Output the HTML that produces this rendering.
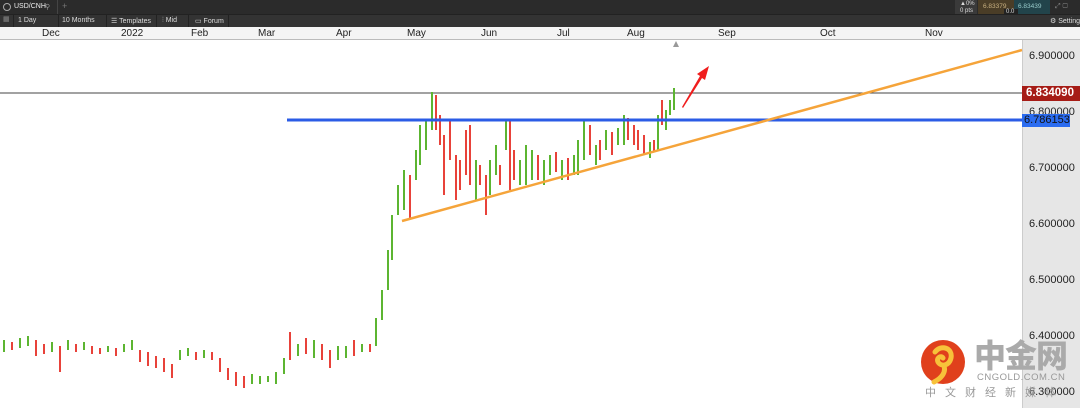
<!DOCTYPE html>
<html><head><meta charset="utf-8"><style>
*{margin:0;padding:0;box-sizing:border-box}
body{width:1080px;height:408px;overflow:hidden;background:#fff;font-family:"Liberation Sans",sans-serif;position:relative}
.bar1{position:absolute;left:0;top:0;width:1080px;height:14px;background:#2b2b2b}
.bar2{position:absolute;left:0;top:14px;width:1080px;height:13px;background:#333;border-top:1px solid #222}
.t{position:absolute;color:#ddd;font-size:7px;top:3px}
.seg{position:absolute;top:0;height:12px;border-right:1px solid #222}
.dax{position:absolute;left:0;top:27px;width:1080px;height:13px;background:#f4f4f4;border-bottom:1px solid #bbb}
.dax span{position:absolute;top:1px;font-size:10px;color:#222}
.pax{position:absolute;left:1022px;top:40px;width:58px;height:368px;background:#e6e6e6;border-left:1px solid #ccc}
.pl{position:absolute;left:1029px;font-size:11px;color:#222}
</style></head><body>
<div class="bar1">
 <div style="position:absolute;left:3px;top:3px;width:8px;height:8px;border:1px solid #aaa;border-radius:50%"></div>
 <span class="t" style="left:14px;color:#eee">USD/CNH</span>
 <span class="t" style="left:45px;color:#999">&#9906;</span>
 <div style="position:absolute;left:57px;top:0;width:1px;height:14px;background:#444"></div>
 <span class="t" style="left:62px;color:#777;font-size:9px;top:1px">+</span>
 <div style="position:absolute;left:955px;top:0;width:22px;height:14px;background:#3a3a3a"></div>
 <span class="t" style="left:960px;top:1px;font-size:6px">▲0%</span>
 <span class="t" style="left:960px;top:8px;font-size:6px">0 pts</span>
 <div style="position:absolute;left:978px;top:0;width:36px;height:14px;background:#4a3d27"></div>
 <span class="t" style="left:983px;font-size:6.5px;color:#c8b080">6.83379</span>
 <div style="position:absolute;left:1014px;top:0;width:36px;height:14px;background:#22444b"></div>
 <span class="t" style="left:1018px;font-size:6.5px;color:#9cc">6.83439</span>
 <div style="position:absolute;left:1004px;top:9px;width:14px;height:7px;background:#222"></div>
 <span class="t" style="left:1006px;top:9px;font-size:6px">0.0</span>
 <span class="t" style="left:1055px;color:#888">⤢ ▢</span>
</div>
<div class="bar2">
 <div class="seg" style="left:0;width:14px"><span class="t" style="left:3px;top:0;color:#888">▦</span></div>
 <div class="seg" style="left:14px;width:45px"><span class="t" style="left:4px;top:2px">1 Day</span></div>
 <div class="seg" style="left:59px;width:48px"><span class="t" style="left:3px;top:2px">10 Months</span></div>
 <div class="seg" style="left:107px;width:50px"><span class="t" style="left:4px;top:2px">☰ Templates</span></div>
 <div class="seg" style="left:157px;width:32px"><span class="t" style="left:5px;top:2px">⫶ Mid</span></div>
 <div class="seg" style="left:189px;width:40px"><span class="t" style="left:6px;top:2px">▭ Forum</span></div>
 <span class="t" style="left:1050px;top:2px">⚙ Setting</span>
</div>
<div class="dax">
 <span style="left:42px">Dec</span><span style="left:121px">2022</span><span style="left:191px">Feb</span><span style="left:258px">Mar</span><span style="left:336px">Apr</span><span style="left:407px">May</span><span style="left:481px">Jun</span><span style="left:557px">Jul</span><span style="left:627px">Aug</span><span style="left:718px">Sep</span><span style="left:820px">Oct</span><span style="left:925px">Nov</span>
</div>
<div class="pax"></div>
<div class="pl" style="top:50px">6.900000</div>
<div class="pl" style="top:106px">6.800000</div>
<div class="pl" style="top:162px">6.700000</div>
<div class="pl" style="top:218px">6.600000</div>
<div class="pl" style="top:274px">6.500000</div>
<div class="pl" style="top:330px">6.400000</div>
<div class="pl" style="top:386px">6.300000</div>
<div style="position:absolute;left:1022px;top:86px;width:58px;height:15px;background:#a61c16;color:#fff;font-weight:bold;font-size:11.5px;padding:1px 0 0 4px">6.834090</div>
<div style="position:absolute;left:1022px;top:114px;width:48px;height:13px;background:#2b6cf0;color:#111;font-size:11px;padding:0 0 0 2px">6.786153</div>
<svg style="position:absolute;left:0;top:0" width="1080" height="408">
 <polygon points="673,47 676,41 679,47" fill="#999"/>
 <line x1="0" y1="93" x2="1022" y2="93" stroke="#444" stroke-width="1"/>
 <g stroke-width="2" fill="none">
 <path stroke="#5cb531" d="M4 340V352M20 338V348M28 336V346M52 342V352M68 340V350M84 342V350M108 346V352M124 344V352M132 340V350M180 350V360M188 348V356M204 350V358M252 374V384M260 376V384M268 376V382M276 372V384M284 358V374M298 344V356M314 340V358M338 346V360M346 346V358M362 344V352M376 318V346M382 290V320M388 250V290M392 215V260M398 185V215M404 170V210M416 150V180M420 125V165M426 120V150M432 92V130M476 160V200M490 160V195M496 145V175M506 120V150M520 160V185M526 145V185M532 150V180M544 160V185M550 155V175M562 160V180M574 155V175M578 140V175M584 120V160M596 145V165M606 130V150M618 128V145M624 115V145M650 142V158M658 115V150M666 110V130M670 100V115M674 88V110"/>
 <path stroke="#e8423a" d="M12 342V350M36 340V356M44 344V354M60 346V372M76 344V352M92 346V354M100 348V354M116 348V356M140 350V362M148 352V366M156 356V368M164 358V372M172 364V378M196 352V360M212 352V360M220 358V372M228 368V380M236 372V386M244 376V388M290 332V360M306 338V354M322 344V360M330 350V368M354 340V356M370 344V352M410 175V218M436 95V130M440 115V145M444 135V195M450 120V160M456 155V200M460 160V190M466 130V175M470 125V185M480 165V185M486 175V215M500 165V185M510 120V190M514 150V180M538 155V180M556 152V172M568 158V180M590 125V155M600 140V160M612 132V155M628 118V140M634 125V145M638 130V150M644 135V155M654 140V152M662 100V125"/>
 </g>
 <line x1="287" y1="120" x2="1022" y2="120" stroke="#2b5ce6" stroke-width="3"/>
 <line x1="402" y1="221" x2="1022" y2="50" stroke="#f5a43a" stroke-width="2.5"/>
 <polygon points="682,107 700,76 697,74 709,66 705,80 702,78 683,108" fill="#f01d1d"/>
 <circle cx="943" cy="362" r="22" fill="#e0401c"/>
 <path d="M935 352c6-8 18-4 16 6c-2 8-10 9-13 4c-2-4 3-7 5-4M944 366c2 6-2 12-10 16" stroke="#f7c23a" stroke-width="5" fill="none" stroke-linecap="round"/>
</svg>
<div style="position:absolute;left:974px;top:337px;font-family:'Noto Sans CJK SC',sans-serif;font-weight:900;font-size:32px;color:#aaa;line-height:34px;letter-spacing:-1px">中金网</div>
<div style="position:absolute;left:977px;top:372px;font-size:9.5px;color:#999;letter-spacing:0.5px">CNGOLD.COM.CN</div>
<div style="position:absolute;left:925px;top:384px;font-family:'Noto Sans CJK SC',sans-serif;font-size:11px;color:#999;letter-spacing:9px">中文财经新媒体</div>
</body></html>
